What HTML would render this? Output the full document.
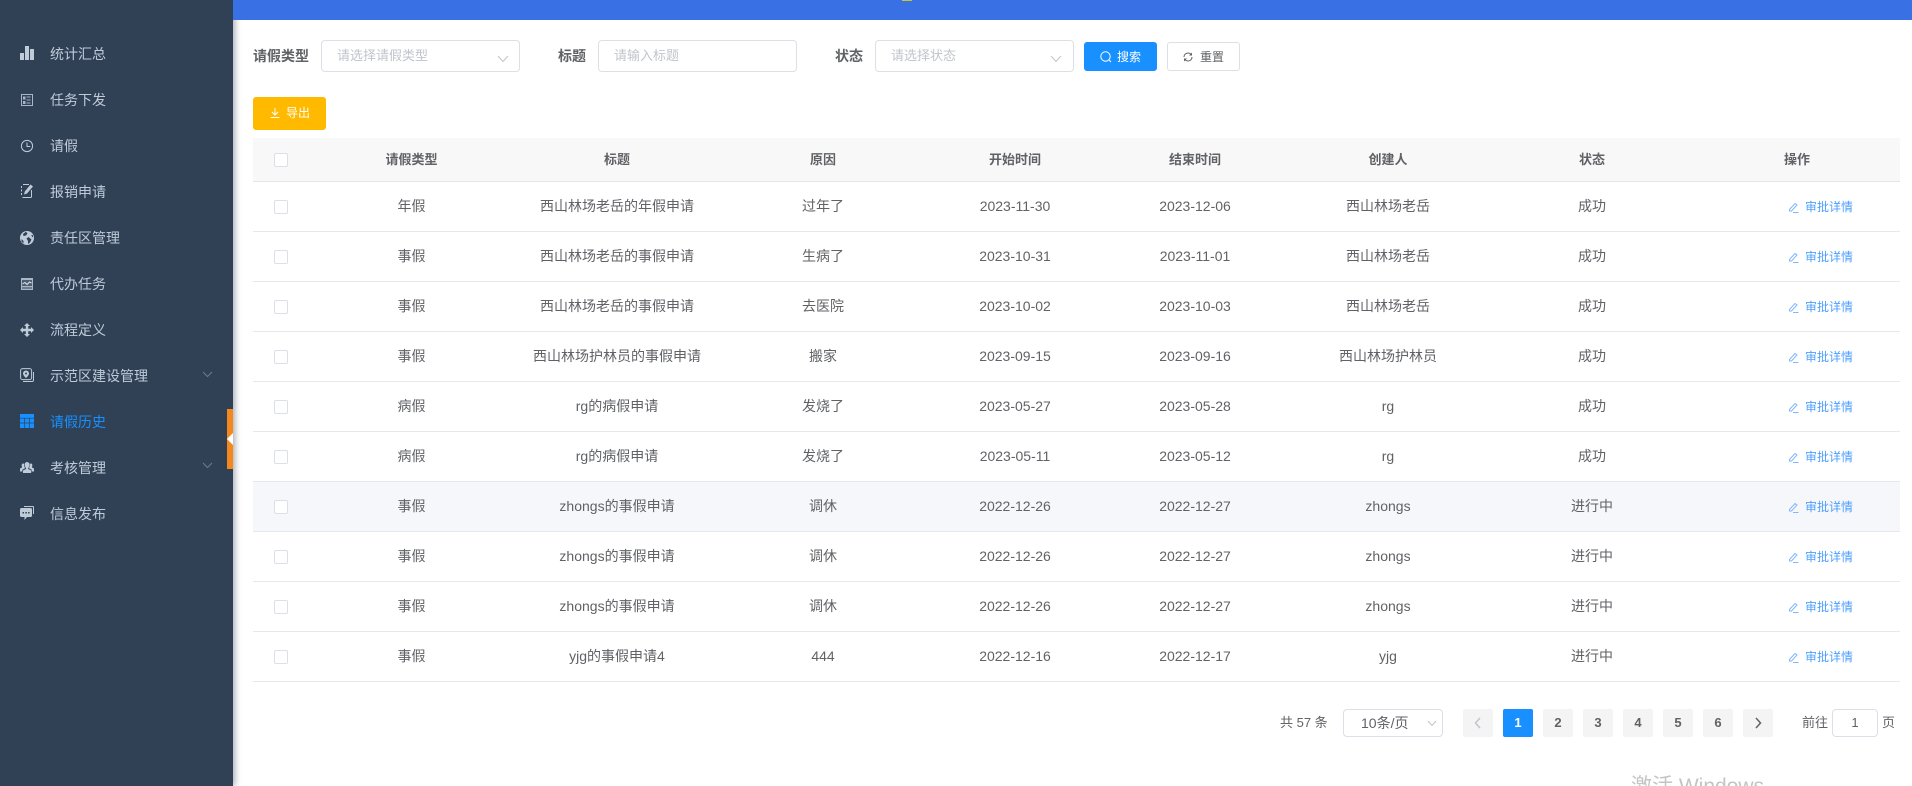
<!DOCTYPE html>
<html lang="zh"><head><meta charset="utf-8"><title>请假历史</title>
<style>
html,body{margin:0;padding:0;width:1912px;height:786px;overflow:hidden;background:#fff}
body{position:relative;font-family:"Liberation Sans","Noto Sans CJK SC",sans-serif;font-size:14px;color:#606266}
.a,.row,.row>span,.hd>span,.m,.m svg{position:absolute}
.a{white-space:nowrap}
#side{position:absolute;left:0;top:0;width:233px;height:786px;background:#304156;box-shadow:2px 0 6px rgba(0,21,41,.35)}
#top{position:absolute;left:233px;top:0;width:1679px;height:20px;background:#3970e4;z-index:2}
.m{left:50px;height:20px;line-height:20px;color:#bfcbd9;white-space:nowrap}
.m svg{left:-30px;top:3px;width:14px;height:14px;overflow:visible}
.box{position:absolute;box-sizing:border-box;border:1px solid #dcdfe6;border-radius:4px;background:#fff}
.lab{font-weight:700;line-height:20px}
.ph{font-size:13px;line-height:20px;color:#c0c4cc}
.hd{position:absolute;left:253px;top:138px;width:1647px;height:44px;box-sizing:border-box;background:#f8f8f9;border-bottom:1px solid #e4e6ec;font-weight:700;font-size:13px;line-height:43px}
.row{left:253px;width:1647px;height:50px;box-sizing:border-box;border-bottom:1px solid #e6e8ee;line-height:49px}
.row>span,.hd>span{top:0;text-align:center;white-space:nowrap}
.cb{position:absolute;left:21px;width:14px;height:14px;box-sizing:border-box;border:1px solid #dcdfe6;border-radius:2px;background:#fff}
.row .cb{top:18px}.hd .cb{top:15px}
.c1{left:58px;width:201px}.c2{left:214px;width:300px}.c3{left:470px;width:200px}.c4{left:662px;width:200px}.c5{left:842px;width:200px}.c6{left:1035px;width:200px}.c7{left:1239px;width:200px}.c8{left:1444px;width:200px}
.row .lk{left:1552px;top:1px;font-size:12px;color:#4c9fff;text-align:left}
.row svg{position:absolute;left:1535px;top:20px;width:11px;height:11px}
.pg{position:absolute;top:709px;width:30px;height:28px;line-height:28px;text-align:center;background:#f4f4f5;border-radius:2px;font-size:13px;font-weight:700;color:#606266}
</style></head><body>
<div id="top"></div>
<div class="a" style="left:902px;top:0;width:10px;height:1px;background:#c9c23c;z-index:3"></div>
<div id="side">
<div class="m" style="top:44px">统计汇总<svg viewBox="0 0 14 14" style="top:2px"><path fill="#bfcbd9" d="M0 7h4v7H0zM5 0h4v14H5zM10 3h4v11h-4z"/></svg></div>
<div class="m" style="top:90px">任务下发<svg viewBox="0 0 14 14" style="top:3px"><path fill="none" stroke="#a9b6c6" d="M1.500 1.500h11v11h-11zM6.500 4h4M6.500 7h4M6.500 10h4"/><path fill="#a9b6c6" d="M3 3.500h2.500v3H3zM3 8h2.500v3H3z"/></svg></div>
<div class="m" style="top:136px">请假<svg viewBox="0 0 14 14"><circle cx="7" cy="7" r="5.600" fill="none" stroke="#bfcbd9"/><path fill="none" stroke="#bfcbd9" d="M7 3.500V7.500h3.200"/></svg></div>
<div class="m" style="top:182px">报销申请<svg viewBox="0 0 14 14" style="top:2px"><path fill="none" stroke="#bfcbd9" d="M3 .5h6M11.500 6v6.500a1 1 0 0 1-1 1h-8M1.500 2v2M1.500 5.500v2M1.500 9v2"/><path fill="#bfcbd9" d="M10.500 .5l2.500 2-6 7-3 1 .8-3z"/></svg></div>
<div class="m" style="top:228px">责任区管理<svg viewBox="0 0 14 14"><circle cx="7" cy="7" r="7" fill="#bfcbd9"/><path fill="#304156" d="M6 .8L3 3l.5 2L6 4.500l1.500-2zM8.500 6l-2 1.500 1.500 2.500 0 3 2-1.500 1.500-3zM13 4l-2 .5 2 2zM1.500 8l2 2 0 2.500-2-2z"/></svg></div>
<div class="m" style="top:274px">代办任务<svg viewBox="0 0 14 14" style="top:3px"><path fill="#a9b6c6" d="M1 1h12v12H1z"/><path fill="#304156" d="M2 3h10v6H2z" opacity=".75"/><path fill="none" stroke="#dfe5ec" d="M2.500 7l2.500-1.500L7 7.500 9.500 5l2 1"/><path stroke="#304156" d="M2 11h10"/></svg></div>
<div class="m" style="top:320px">流程定义<svg viewBox="0 0 14 14"><path fill="#bfcbd9" d="M7 0l3 3H8.200v2.800H11V4l3 3-3 3V8.200H8.200V11H10l-3 3-3-3h1.800V8.200H3V10L0 7l3-3v1.800h2.800V3H4z"/></svg></div>
<div class="m" style="top:366px">示范区建设管理<svg viewBox="0 0 14 14" style="top:2px"><rect x=".6" y=".6" width="11" height="11" rx="2" fill="none" stroke="#bfcbd9"/><path fill="none" stroke="#bfcbd9" d="M13.500 4v8a1.500 1.500 0 0 1-1.500 1.500H3"/><path fill="#bfcbd9" fill-rule="evenodd" d="M6 2.500a3 3 0 0 1 3 3c0 2-3 4.500-3 4.500s-3-2.500-3-4.500a3 3 0 0 1 3-3zm0 2a1 1 0 1 0 0 2 1 1 0 0 0 0-2z"/></svg></div>
<div class="m" style="top:412px;color:#1890ff">请假历史<svg viewBox="0 0 14 14" style="top:2px"><path fill="#1890ff" d="M0 0h14v14H0z"/><path stroke="#304156" stroke-width=".7" d="M0 4.200h14M0 9h14M4.700 4.200V14M9.300 4.200V14"/></svg></div>
<div class="m" style="top:458px">考核管理<svg viewBox="0 0 14 14" style="top:3px"><path fill="#bfcbd9" d="M7 1a2.600 2.600 0 0 1 2.600 2.800c0 1.600-.8 2.700-1.400 3.200v1l3 1.500V12H3v-2.500l3-1.500V7c-.6-.5-1.400-1.600-1.400-3.200A2.600 2.600 0 0 1 7 1zM3.200 2.500c.4 0 .7.100 1 .3-.3.800-.4 2.500.7 3.700v.9l-2.600 1.300v1.800H0V7.500l2-1V5.800C1.500 5 1.300 2.500 3.200 2.500zM10.800 2.500c1.900 0 1.700 2.500 1.200 3.300v.7l2 1v3h-2.300V8.700L9.100 7.400v-.9c1.100-1.200 1-2.900.7-3.700.3-.2.600-.3 1-.3z"/></svg></div>
<div class="m" style="top:504px">信息发布<svg viewBox="0 0 14 14" style="top:2px"><path fill="#bfcbd9" d="M4 0h9a1 1 0 0 1 1 1v7h-1V1H4z"/><path fill="#bfcbd9" d="M1.500 2h9A1.500 1.500 0 0 1 12 3.500v6a1.500 1.500 0 0 1-1.500 1.500H7l-2.500 3v-3h-3A1.500 1.500 0 0 1 0 9.500v-6A1.500 1.500 0 0 1 1.500 2z"/><path fill="#304156" d="M2.500 6h1.500v1.500H2.500zM5.300 6h1.500v1.500H5.300zM8.100 6h1.500v1.500H8.100z"/></svg></div>
<svg class="a" style="left:202px;top:371px" width="11" height="7" viewBox="0 0 11 7"><path fill="none" stroke="#6f7b8a" d="M1 1l4.500 4.500L10 1"/></svg>
<svg class="a" style="left:202px;top:462px" width="11" height="7" viewBox="0 0 11 7"><path fill="none" stroke="#6f7b8a" d="M1 1l4.500 4.500L10 1"/></svg>
<div class="a" style="left:227px;top:409px;width:6px;height:60px;background:#f5871f"></div>
<svg class="a" style="left:227px;top:433px" width="6" height="12" viewBox="0 0 6 12"><path fill="#fff" d="M0 6l6-6v12z"/></svg>
</div>

<div class="a lab" style="left:253px;top:46px">请假类型</div>
<div class="box" style="left:321px;top:40px;width:199px;height:32px"></div>
<div class="a ph" style="left:337px;top:46px">请选择请假类型</div>
<svg class="a" style="left:497px;top:55px" width="12" height="8" viewBox="0 0 12 8"><path fill="none" stroke="#c0c4cc" d="M1 1l5 5.500L11 1"/></svg>
<div class="a lab" style="left:558px;top:46px">标题</div>
<div class="box" style="left:598px;top:40px;width:199px;height:32px"></div>
<div class="a ph" style="left:614px;top:46px">请输入标题</div>
<div class="a lab" style="left:835px;top:46px">状态</div>
<div class="box" style="left:875px;top:40px;width:199px;height:32px"></div>
<div class="a ph" style="left:891px;top:46px">请选择状态</div>
<svg class="a" style="left:1050px;top:55px" width="12" height="8" viewBox="0 0 12 8"><path fill="none" stroke="#c0c4cc" d="M1 1l5 5.500L11 1"/></svg>

<div class="box" style="left:1084px;top:42px;width:73px;height:29px;background:#1890ff;border-color:#1890ff;border-radius:3px"></div>
<svg class="a" style="left:1100px;top:51px" width="12" height="12" viewBox="0 0 12 12"><circle cx="5.500" cy="5.500" r="4.700" fill="none" stroke="#fff"/><path stroke="#fff" d="M9 9l2 2"/></svg>
<div class="a" style="left:1117px;top:47px;font-size:12px;line-height:20px;color:#fff">搜索</div>
<div class="box" style="left:1167px;top:42px;width:73px;height:29px;border-radius:3px"></div>
<svg class="a" style="left:1183px;top:52px" width="10" height="10" viewBox="0 0 10 10"><path fill="none" stroke="#606266" d="M1 5a4 4 0 0 1 7-2.600M9 5a4 4 0 0 1-7 2.600"/><path fill="#606266" d="M9 .5v3H6zM1 9.500v-3h3z"/></svg>
<div class="a" style="left:1200px;top:47px;font-size:12px;line-height:20px">重置</div>

<div class="a" style="left:253px;top:97px;width:73px;height:33px;background:#ffba00;border-radius:3px"></div>
<svg class="a" style="left:270px;top:108px" width="10" height="10" viewBox="0 0 10 10"><path fill="none" stroke="#fff" d="M5 0v6.500M2 4l3 3 3-3M.5 9.500h9"/></svg>
<div class="a" style="left:286px;top:103px;font-size:12px;line-height:20px;color:#fff">导出</div>

<div class="hd"><i class="cb"></i><span class="c1">请假类型</span><span class="c2">标题</span><span class="c3">原因</span><span class="c4">开始时间</span><span class="c5">结束时间</span><span class="c6">创建人</span><span class="c7">状态</span><span class="c8">操作</span></div>

<div class="row" style="top:182px"><i class="cb"></i><span class="c1">年假</span><span class="c2">西山林场老岳的年假申请</span><span class="c3">过年了</span><span class="c4">2023-11-30</span><span class="c5">2023-12-06</span><span class="c6">西山林场老岳</span><span class="c7">成功</span><svg viewBox="0 0 11 11"><path fill="none" stroke="#7fb6ff" d="M1.500 7.500L7 1.500l2 1.500-5.500 6H1.500zM5 10.500h5.500"/></svg><span class="lk">审批详情</span></div>
<div class="row" style="top:232px"><i class="cb"></i><span class="c1">事假</span><span class="c2">西山林场老岳的事假申请</span><span class="c3">生病了</span><span class="c4">2023-10-31</span><span class="c5">2023-11-01</span><span class="c6">西山林场老岳</span><span class="c7">成功</span><svg viewBox="0 0 11 11"><path fill="none" stroke="#7fb6ff" d="M1.500 7.500L7 1.500l2 1.500-5.500 6H1.500zM5 10.500h5.500"/></svg><span class="lk">审批详情</span></div>
<div class="row" style="top:282px"><i class="cb"></i><span class="c1">事假</span><span class="c2">西山林场老岳的事假申请</span><span class="c3">去医院</span><span class="c4">2023-10-02</span><span class="c5">2023-10-03</span><span class="c6">西山林场老岳</span><span class="c7">成功</span><svg viewBox="0 0 11 11"><path fill="none" stroke="#7fb6ff" d="M1.500 7.500L7 1.500l2 1.500-5.500 6H1.500zM5 10.500h5.500"/></svg><span class="lk">审批详情</span></div>
<div class="row" style="top:332px"><i class="cb"></i><span class="c1">事假</span><span class="c2">西山林场护林员的事假申请</span><span class="c3">搬家</span><span class="c4">2023-09-15</span><span class="c5">2023-09-16</span><span class="c6">西山林场护林员</span><span class="c7">成功</span><svg viewBox="0 0 11 11"><path fill="none" stroke="#7fb6ff" d="M1.500 7.500L7 1.500l2 1.500-5.500 6H1.500zM5 10.500h5.500"/></svg><span class="lk">审批详情</span></div>
<div class="row" style="top:382px"><i class="cb"></i><span class="c1">病假</span><span class="c2">rg的病假申请</span><span class="c3">发烧了</span><span class="c4">2023-05-27</span><span class="c5">2023-05-28</span><span class="c6">rg</span><span class="c7">成功</span><svg viewBox="0 0 11 11"><path fill="none" stroke="#7fb6ff" d="M1.500 7.500L7 1.500l2 1.500-5.500 6H1.500zM5 10.500h5.500"/></svg><span class="lk">审批详情</span></div>
<div class="row" style="top:432px"><i class="cb"></i><span class="c1">病假</span><span class="c2">rg的病假申请</span><span class="c3">发烧了</span><span class="c4">2023-05-11</span><span class="c5">2023-05-12</span><span class="c6">rg</span><span class="c7">成功</span><svg viewBox="0 0 11 11"><path fill="none" stroke="#7fb6ff" d="M1.500 7.500L7 1.500l2 1.500-5.500 6H1.500zM5 10.500h5.500"/></svg><span class="lk">审批详情</span></div>
<div class="row" style="top:482px;background:#f5f7fa"><i class="cb"></i><span class="c1">事假</span><span class="c2">zhongs的事假申请</span><span class="c3">调休</span><span class="c4">2022-12-26</span><span class="c5">2022-12-27</span><span class="c6">zhongs</span><span class="c7">进行中</span><svg viewBox="0 0 11 11"><path fill="none" stroke="#7fb6ff" d="M1.500 7.500L7 1.500l2 1.500-5.500 6H1.500zM5 10.500h5.500"/></svg><span class="lk">审批详情</span></div>
<div class="row" style="top:532px"><i class="cb"></i><span class="c1">事假</span><span class="c2">zhongs的事假申请</span><span class="c3">调休</span><span class="c4">2022-12-26</span><span class="c5">2022-12-27</span><span class="c6">zhongs</span><span class="c7">进行中</span><svg viewBox="0 0 11 11"><path fill="none" stroke="#7fb6ff" d="M1.500 7.500L7 1.500l2 1.500-5.500 6H1.500zM5 10.500h5.500"/></svg><span class="lk">审批详情</span></div>
<div class="row" style="top:582px"><i class="cb"></i><span class="c1">事假</span><span class="c2">zhongs的事假申请</span><span class="c3">调休</span><span class="c4">2022-12-26</span><span class="c5">2022-12-27</span><span class="c6">zhongs</span><span class="c7">进行中</span><svg viewBox="0 0 11 11"><path fill="none" stroke="#7fb6ff" d="M1.500 7.500L7 1.500l2 1.500-5.500 6H1.500zM5 10.500h5.500"/></svg><span class="lk">审批详情</span></div>
<div class="row" style="top:632px"><i class="cb"></i><span class="c1">事假</span><span class="c2">yjg的事假申请4</span><span class="c3">444</span><span class="c4">2022-12-16</span><span class="c5">2022-12-17</span><span class="c6">yjg</span><span class="c7">进行中</span><svg viewBox="0 0 11 11"><path fill="none" stroke="#7fb6ff" d="M1.500 7.500L7 1.500l2 1.500-5.500 6H1.500zM5 10.500h5.500"/></svg><span class="lk">审批详情</span></div>

<div class="a" style="left:1280px;top:713px;font-size:13px;line-height:20px">共 57 条</div>
<div class="box" style="left:1343px;top:709px;width:100px;height:28px"></div>
<div class="a" style="left:1361px;top:713px;font-size:14px;line-height:20px">10条/页</div>
<svg class="a" style="left:1427px;top:720px" width="10" height="7" viewBox="0 0 10 7"><path fill="none" stroke="#c0c4cc" d="M1 1l4 4.500L9 1"/></svg>
<div class="pg" style="left:1463px"></div>
<svg class="a" style="left:1474px;top:717px" width="8" height="12" viewBox="0 0 8 12"><path fill="none" stroke="#c0c4cc" stroke-width="1.500" d="M6 1L1.500 6 6 11"/></svg>
<div class="pg" style="left:1503px;background:#1890ff;color:#fff">1</div>
<div class="pg" style="left:1543px">2</div>
<div class="pg" style="left:1583px">3</div>
<div class="pg" style="left:1623px">4</div>
<div class="pg" style="left:1663px">5</div>
<div class="pg" style="left:1703px">6</div>
<div class="pg" style="left:1743px"></div>
<svg class="a" style="left:1754px;top:717px" width="8" height="12" viewBox="0 0 8 12"><path fill="none" stroke="#606266" stroke-width="1.500" d="M2 1l4.500 5L2 11"/></svg>
<div class="a" style="left:1802px;top:713px;font-size:13px;line-height:20px">前往</div>
<div class="box" style="left:1832px;top:709px;width:46px;height:28px;text-align:center;font-size:13px;line-height:26px">1</div>
<div class="a" style="left:1882px;top:713px;font-size:13px;line-height:20px">页</div>
<div class="a" style="left:1631px;top:774px;font-size:21px;line-height:26px;color:#c4c4c4">激活 Windows</div>
</body></html>
